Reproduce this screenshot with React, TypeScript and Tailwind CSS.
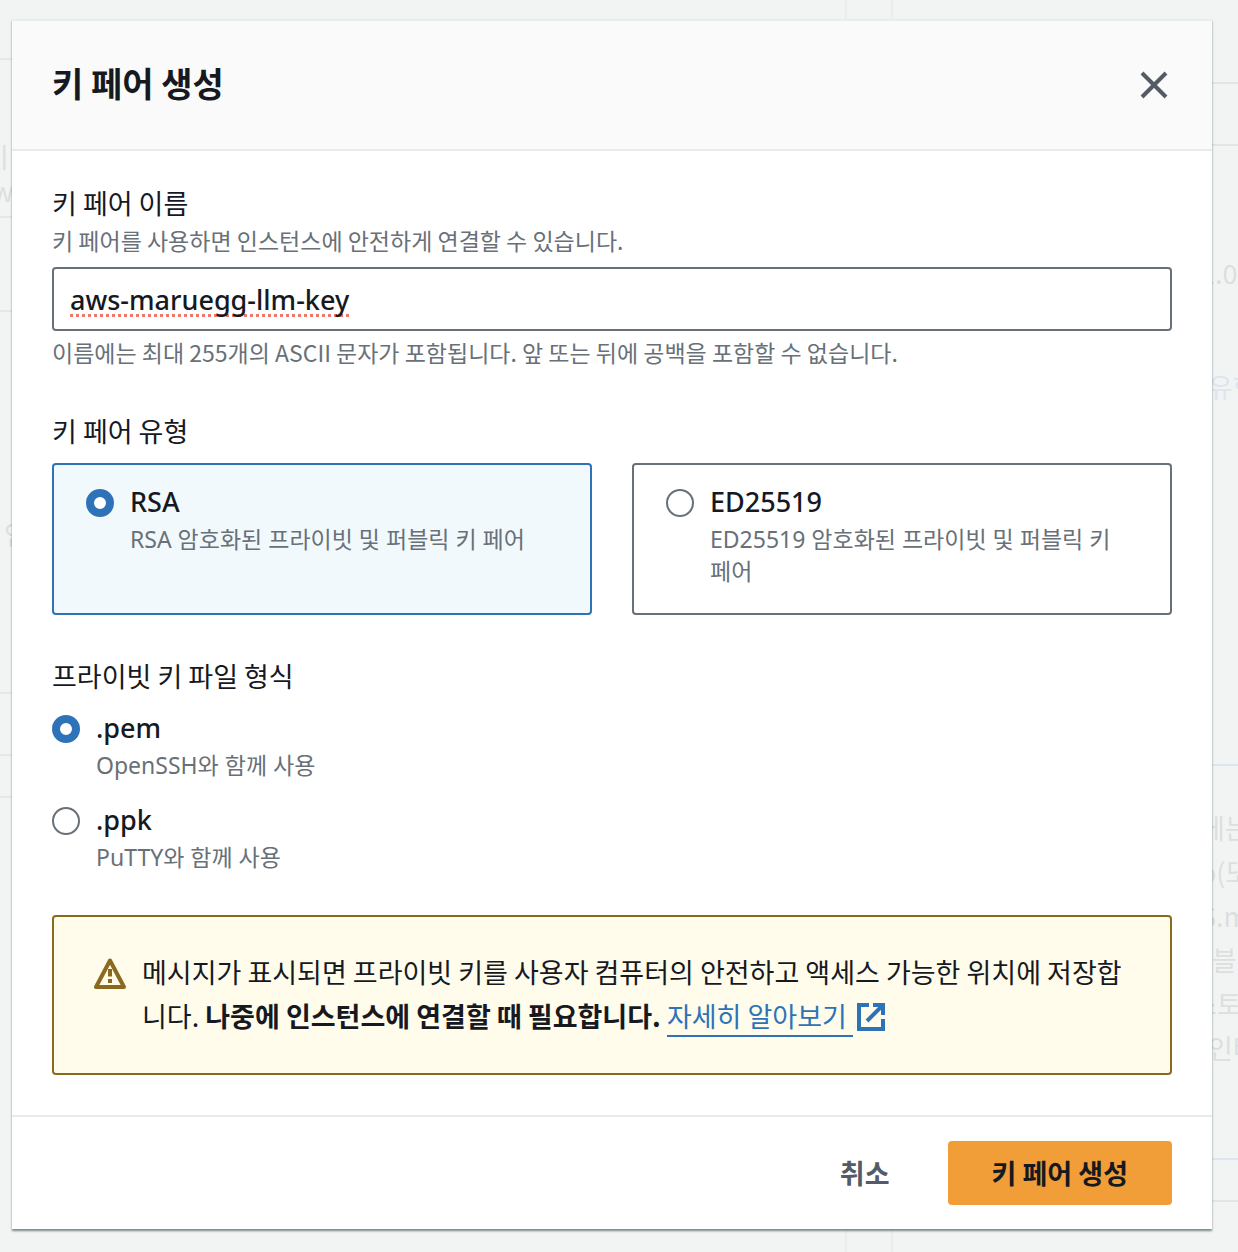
import React, { useState } from "react";
import clsx from "clsx";

const KEY_TYPES = [
  { id: "rsa", title: "RSA", desc: "RSA 암호화된 프라이빗 및 퍼블릭 키 페어" },
  { id: "ed25519", title: "ED25519", desc: "ED25519 암호화된 프라이빗 및 퍼블릭 키 페어" },
];

const FORMATS = [
  { id: "pem", title: ".pem", desc: "OpenSSH와 함께 사용" },
  { id: "ppk", title: ".ppk", desc: "PuTTY와 함께 사용" },
];

type OptionProps = {
  name: string;
  option: { id: string; title: string; desc: string };
  checked: boolean;
  onChange: () => void;
  className?: string;
};

function RadioOption({ name, option, checked, onChange, className }: OptionProps) {
  return (
    <label
      className={clsx(
        "flex items-start gap-4 font-['Noto_Sans','Noto_Sans_CJK_KR',sans-serif]",
        className,
      )}
    >
      <input
        type="radio"
        name={name}
        value={option.id}
        checked={checked}
        onChange={onChange}
        className="mt-2 size-7 shrink-0 appearance-none rounded-full border-2 border-[#687078] bg-white checked:border-8 checked:border-[#2e73b8]"
      />
      <span className="block">
        <span className="block text-[27px] leading-[42px] font-medium">{option.title}</span>
        <span className="block text-[23px] leading-8 text-[#687078]">{option.desc}</span>
      </span>
    </label>
  );
}

// Dimmed console page that sits under the dialog
function Backdrop() {
  return (
    <div
      aria-hidden="true"
      className="absolute inset-0 flex gap-11 overflow-hidden whitespace-nowrap text-[27px] leading-11 text-[#dcdfde]"
    >
      <div className="flex-1 border-r-2 border-[#eaeded] *:border-[#e5e8e7]">
        <div className="h-[60px] border-b-2" />
        <div className="h-[158px] border-b-2 pt-20 leading-[34px]">
          <p className="-ml-4">기</p>
          <p className="-ml-2">w</p>
        </div>
        <div className="h-[94px] border-b-2" />
        <div className="h-[382px] border-b-2 pt-[200px]">
          <p className="pl-1">인</p>
        </div>
        <div className="h-[62px] border-b-2" />
        <div className="h-[42px] border-b-2" />
      </div>
      <div className="w-[347px] border-l-2 border-[#eaeded] *:border-[#e2e5e5] *:pl-[315px]">
        <div className="h-[84px] border-b-2" />
        <div className="h-[62px] border-b-2" />
        <div className="h-[620px] border-b-2 border-[#dde5ee]! pt-[105px]">
          <p className="-ml-2">1.04</p>
          <p className="mt-[70px] text-[#dde5ee]">유형</p>
        </div>
        <div className="h-[394px] border-b-2 border-[#dde5ee]! pt-10">
          <p className="-ml-2">에는</p>
          <p className="-ml-2">o(또</p>
          <p className="-ml-2">S.m</p>
          <p className="pl-1">블록</p>
          <p className="-ml-4">스토리</p>
          <p>인터</p>
        </div>
        <div className="h-[42px] border-b-2" />
      </div>
    </div>
  );
}

export default function App() {
  const [name, setName] = useState("aws-maruegg-llm-key");
  const [keyType, setKeyType] = useState("rsa");
  const [format, setFormat] = useState("pem");

  return (
    <div className="relative min-h-screen bg-[#f2f4f4] pt-[19px] pr-[26px] pb-[23px] pl-3 font-['Noto_Sans_CJK_KR',sans-serif] text-[#16191f]">
      <Backdrop />

      <div
        role="dialog"
        aria-labelledby="dialog-title"
        className="relative border-t-2 border-[#eaeded] bg-white shadow-[0_2px_2px_0_rgba(0,28,36,0.5)]"
      >
        {/* Header */}
        <header className="flex items-start justify-between border-b-2 border-[#eaeaea] bg-[#fafafa] px-10 py-[42px]">
          <h1 id="dialog-title" className="text-[34px] leading-10 font-bold">
            키 페어 생성
          </h1>
          <button type="button" aria-label="닫기" className="h-11 p-1 text-[#545b64]">
            <svg className="size-7" viewBox="0 0 28 28" fill="none" stroke="currentColor" strokeWidth="4">
              <path d="M2 2l24 24M26 2L2 26" />
            </svg>
          </button>
        </header>

        {/* Form */}
        <form className="px-10 pt-[31px] pb-10">
          <label htmlFor="key-name" className="block text-[27px] leading-[42px]">
            키 페어 이름
          </label>
          <p className="text-[23px] leading-8 text-[#687078]">
            키 페어를 사용하면 인스턴스에 안전하게 연결할 수 있습니다.
          </p>
          <input
            id="key-name"
            type="text"
            value={name}
            onChange={(e) => setName(e.target.value)}
            spellCheck={false}
            className="mt-[11px] block h-16 w-full rounded-sm border-2 border-[#687078] bg-white px-4 font-['Noto_Sans',sans-serif] text-[27px] font-medium underline decoration-[#f0776b] decoration-dotted decoration-3 underline-offset-4 [text-decoration-skip-ink:none]"
          />
          <p className="mt-[5px] text-[23px] leading-8 text-[#687078]">
            이름에는 최대 255개의 ASCII 문자가 포함됩니다. 앞 또는 뒤에 공백을 포함할 수 없습니다.
          </p>

          <fieldset className="mt-[42px]">
            <legend className="text-[27px] leading-[42px]">키 페어 유형</legend>
            <div className="mt-[11px] grid grid-cols-2 gap-10">
              {KEY_TYPES.map((option) => (
                <RadioOption
                  key={option.id}
                  name="key-type"
                  option={option}
                  checked={keyType === option.id}
                  onChange={() => setKeyType(option.id)}
                  className={clsx(
                    "rounded-sm border-2 pt-4 pr-10 pb-[26px] pl-8",
                    keyType === option.id ? "border-[#2e73b8] bg-[#f2f9fd]" : "border-[#687078]",
                  )}
                />
              ))}
            </div>
          </fieldset>

          <fieldset className="mt-10">
            <legend className="text-[27px] leading-[42px]">프라이빗 키 파일 형식</legend>
            <div className="mt-2.5 flex flex-col gap-[18px]">
              {FORMATS.map((option) => (
                <RadioOption
                  key={option.id}
                  name="format"
                  option={option}
                  checked={format === option.id}
                  onChange={() => setFormat(option.id)}
                />
              ))}
            </div>
          </fieldset>

          {/* Warning */}
          <div className="mt-[42px] flex gap-4 rounded-sm border-2 border-[#8a6a1e] bg-[#fffceb] px-10 pt-[33px] pb-[35px]">
            <svg className="mt-[7px] size-8 shrink-0" viewBox="0 0 32 32" fill="none" stroke="#8a6a1e">
              <path d="M16 3.5L2 30h28z" strokeWidth="4" strokeLinejoin="round" />
              <path d="M16 12v7.5M16 22v4" strokeWidth="4" />
            </svg>
            <p className="text-[27px] leading-11">
              메시지가 표시되면 프라이빗 키를 사용자 컴퓨터의 안전하고 액세스 가능한 위치에 저장합니다.{" "}
              <b>나중에 인스턴스에 연결할 때 필요합니다.</b>{" "}
              <a href="#learn-more" className="text-[#2e73b8]">
                <span className="border-b-2 border-[#2e73b8] pr-1.5">자세히 알아보기</span>
                <svg
                  className="ml-1 inline-block size-7 align-[-4px]"
                  viewBox="0 0 28 28"
                  fill="none"
                  stroke="currentColor"
                  strokeWidth="4"
                >
                  <path d="M12 2H2v24h24V16M16 2h10v10M26 2L10 18" />
                </svg>
              </a>
            </p>
          </div>
        </form>

        {/* Actions */}
        <footer className="flex justify-end gap-3.5 border-t-2 border-[#eaeaea] px-10 py-6 text-[27px] leading-11 font-bold">
          <button type="button" className="h-16 px-11 text-[#545b64]">
            취소
          </button>
          <button type="submit" className="h-16 rounded-sm bg-[#f19e38] px-11">
            키 페어 생성
          </button>
        </footer>
      </div>
    </div>
  );
}
